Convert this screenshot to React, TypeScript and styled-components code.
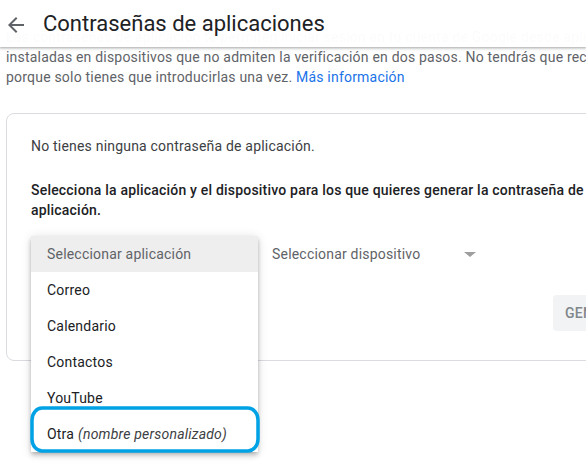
import styled, { createGlobalStyle } from 'styled-components';

const GlobalStyle = createGlobalStyle`
  html, body {
    margin: 0;
    padding: 0;
    background: #ffffff;
    overflow: hidden;
  }
  body {
    font-family: Roboto, "Liberation Sans", Arial, sans-serif;
    letter-spacing: 0.2px;
    -webkit-font-smoothing: antialiased;
  }
`

const StyledPage = styled.div`
  position: relative;
  width: 586px;
  height: 464px;
  overflow: hidden;
  padding: 27px 0 0 6px;
  box-sizing: border-box;
`
const StyledHeader = styled.header`
  position: absolute;
  left: 0;
  top: 0;
  width: 100%;
  height: 47px;
  display: flex;
  align-items: center;
  gap: 15px;
  padding: 0 0 0 4px;
  box-sizing: border-box;
  background: rgba(255, 255, 255, 0.975);
  box-shadow: 0 1px 2px rgba(60, 64, 67, 0.3), 0 1px 3px 1px rgba(60, 64, 67, 0.15);
  z-index: 2;
`
const StyledBackButton = styled.span`
  display: flex;
  width: 24px;
  height: 24px;
  margin-top: 2px;
  color: #5f6368;
`
const StyledTitle = styled.h1`
  margin: 0 0 1px 0;
  font-family: Roboto, "Open Sans", sans-serif;
  font-size: 22px;
  font-weight: 400;
  color: #202124;
  letter-spacing: 0;
`
const StyledIntro = styled.p`
  margin: 0;
  width: 640px;
  font-size: 14px;
  line-height: 20px;
  color: #5f6368;
  white-space: nowrap;
`
const StyledLink = styled.a`
  color: #1a73e8;
  text-decoration: none;
`
const StyledCard = styled.section`
  margin-top: 26px;
  width: 672px;
  border: 1px solid #dadce0;
  border-radius: 8px;
  padding: 22px 24px 29px 24px;
  box-sizing: border-box;
`
const StyledCardText = styled.p<{ $strong?: boolean }>`
  margin: 0 0 24px 0;
  font-size: 14px;
  line-height: 20px;
  color: ${p => (p.$strong ? '#202124' : '#3c4043')};
  font-weight: ${p => (p.$strong ? 500 : 400)};
  white-space: nowrap;
`
const StyledSelectRow = styled.div`
  display: flex;
  align-items: center;
  gap: 14px;
  margin-top: -8px;
  height: 36px;
`
const StyledSelectBox = styled.div<{ $width: number }>`
  position: relative;
  width: ${p => p.$width}px;
  height: 36px;
  display: flex;
  align-items: center;
  justify-content: space-between;
  font-size: 14px;
  color: #5f6368;
`
const StyledCaret = styled.span`
  width: 0;
  height: 0;
  margin-right: 4px;
  border-left: 6px solid transparent;
  border-right: 6px solid transparent;
  border-top: 5px solid #9e9e9e;
`
const StyledMenu = styled.ul`
  position: absolute;
  left: 0;
  top: 0;
  width: 227px;
  margin: 0;
  padding: 0;
  list-style: none;
  background: #ffffff;
  box-shadow: 0 2px 4px -1px rgba(0, 0, 0, 0.2), 0 4px 5px 0 rgba(0, 0, 0, 0.14), 0 1px 10px 0 rgba(0, 0, 0, 0.12);
  z-index: 3;
`
const StyledMenuItem = styled.li<{ $placeholder?: boolean }>`
  position: relative;
  height: 36px;
  display: flex;
  align-items: center;
  padding: 0 16px;
  font-size: 14px;
  color: ${p => (p.$placeholder ? '#5f6368' : '#202124')};
  background: ${p => (p.$placeholder ? '#eeeeee' : 'transparent')};
  white-space: nowrap;
`
const StyledHint = styled.em`
  margin-left: 4px;
  font-style: italic;
  color: #3c4043;
`
const StyledHighlight = styled.svg`
  position: absolute;
  left: -1px;
  top: -10px;
  pointer-events: none;
`
const StyledActions = styled.div`
  display: flex;
  justify-content: flex-end;
  margin-top: 23px;
`
const StyledButton = styled.button`
  height: 36px;
  min-width: 100px;
  padding: 0 12px;
  border: none;
  border-radius: 4px;
  background: #f1f3f4;
  color: #80868b;
  font-family: Roboto, sans-serif;
  font-size: 14px;
  font-weight: 500;
  letter-spacing: 0.25px;
  text-align: left;
`

const apps = ['Correo', 'Calendario', 'Contactos', 'YouTube']

export default function App() {
  return (
    <>
      <GlobalStyle />
      <StyledPage>
        <StyledHeader>
          <StyledBackButton>
            <svg width="24" height="24" viewBox="0 0 24 24" fill="currentColor">
              <path d="M20 11H7.83l5.59-5.59L12 4l-8 8 8 8 1.41-1.41L7.83 13H20v-2z" />
            </svg>
          </StyledBackButton>
          <StyledTitle>Contraseñas de aplicaciones</StyledTitle>
        </StyledHeader>

        <StyledIntro>
          Las contraseñas de aplicación te permiten iniciar sesión en tu cuenta de Google desde aplicaciones
          <br />
          instaladas en dispositivos que no admiten la verificación en dos pasos. No tendrás que recordarlas
          <br />
          porque solo tienes que introducirlas una vez. <StyledLink href="#">Más información</StyledLink>
        </StyledIntro>

        <StyledCard>
          <StyledCardText>No tienes ninguna contraseña de aplicación.</StyledCardText>
          <StyledCardText $strong>
            Selecciona la aplicación y el dispositivo para los que quieres generar la contraseña de
            <br />
            aplicación.
          </StyledCardText>

          <StyledSelectRow>
            <StyledSelectBox $width={227}>
              <StyledMenu>
                <StyledMenuItem $placeholder>Seleccionar aplicación</StyledMenuItem>
                {apps.map(app => (
                  <StyledMenuItem key={app}>{app}</StyledMenuItem>
                ))}
                <StyledMenuItem>
                  Otra<StyledHint>(nombre personalizado)</StyledHint>
                  {/* hand-drawn annotation round the last option */}
                  <StyledHighlight width="230" height="48" viewBox="0 0 230 48">
                    <rect x="2" y="2" width="226" height="43" rx="10" ry="12" fill="none" stroke="#00a2e6" strokeWidth="3.5" />
                  </StyledHighlight>
                </StyledMenuItem>
              </StyledMenu>
            </StyledSelectBox>
            <StyledSelectBox $width={208}>
              Seleccionar dispositivo
              <StyledCaret />
            </StyledSelectBox>
          </StyledSelectRow>

          <StyledActions>
            <StyledButton>GENERAR</StyledButton>
          </StyledActions>
        </StyledCard>
      </StyledPage>
    </>
  );
}
